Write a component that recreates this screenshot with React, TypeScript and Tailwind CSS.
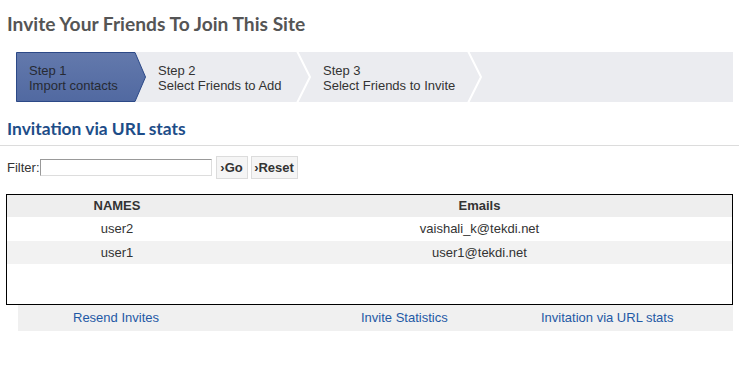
import React from 'react';

const steps = [
  { n: 'Step 1', label: 'Import contacts', width: 'w-[130px]', pl: 'pl-[13px]' },
  { n: 'Step 2', label: 'Select Friends to Add', width: 'w-[166px]', pl: 'pl-[12px]' },
  { n: 'Step 3', label: 'Select Friends to Invite', width: 'w-[171px]', pl: 'pl-[11px]' },
];

const rows = [
  { name: 'user2', email: 'vaishali_k@tekdi.net' },
  { name: 'user1', email: 'user1@tekdi.net' },
];

const Chevron = () => (
  <svg width="16" height="50" viewBox="0 0 16 50" className="flex-none">
    <polyline points="1,-1 14,25 1,51" fill="none" stroke="#ffffff" strokeWidth="2" />
  </svg>
);

export default function App() {
  return (
    <div className="w-[739px] h-[366px] bg-white text-[13px] text-[#333] font-['Liberation_Sans',Arial,sans-serif]">
      {/* Title */}
      <h1 className="pl-[7px] pt-[11px] text-[19.2px] leading-[26px] font-bold text-[#555] font-['Lato',sans-serif]">
        Invite Your Friends To Join This Site
      </h1>

      {/* Steps */}
      <div className="mt-[15px] ml-[16px] w-[717px] h-[50px] bg-[#ebecf0] flex">
        {steps.map((s, i) => (
          <div key={i} className={`${s.width} h-[50px] flex relative flex-none`}>
            {i === 0 && (
              <svg className="absolute inset-0" width="130" height="50" viewBox="0 0 130 50">
                <defs>
                  <linearGradient id="stepBlue" x1="0" y1="0" x2="0" y2="1">
                    <stop offset="0" stopColor="#6379ac" />
                    <stop offset="1" stopColor="#5169a1" />
                  </linearGradient>
                </defs>
                <polygon points="0.5,0.5 119,0.5 129.5,25 119,49.5 0.5,49.5" fill="url(#stepBlue)" stroke="#2c4987" strokeWidth="1" />
              </svg>
            )}
            <div className={`relative flex-1 ${s.pl} pt-[11px] leading-[15px] ${i === 0 ? 'text-[#262a33]' : 'text-[#333]'}`}>
              <div>{s.n}</div>
              <div>{s.label}</div>
            </div>
            {i > 0 && <Chevron />}
          </div>
        ))}
      </div>

      {/* Sub heading */}
      <h2 className="mt-[16px] pl-[7px] text-[17.4px] leading-[22px] font-bold text-[#1d4d88] font-['Lato',sans-serif]">
        Invitation via URL stats
      </h2>
      <div className="mt-[5px] h-px bg-[#dcdcdc]" />

      {/* Filter */}
      <div className="mt-[10px] pl-[7px] flex items-center h-[23px]">
        <span>Filter:</span>
        <input
          className="w-[172px] h-[17px] border border-[#999] border-r-[#ddd] border-b-[#ddd] bg-white outline-none"
          type="text"
        />
        <button className="ml-[4px] w-[32px] h-[23px] bg-[#f5f5f5] border border-[#dcdcdc] font-bold text-[#333]">
          ›Go
        </button>
        <button className="ml-[3px] w-[47px] h-[23px] bg-[#f5f5f5] border border-[#dcdcdc] font-bold text-[#333]">
          ›Reset
        </button>
      </div>

      {/* Table */}
      <div className="mt-[15px] ml-[6px] w-[727px] h-[111px] border border-black">
        <table className="w-full border-collapse">
          <thead>
            <tr className="bg-[#eeeeee] h-[22px]">
              <th className="w-[220px] font-bold text-center">NAMES</th>
              <th className="font-bold text-center">Emails</th>
            </tr>
          </thead>
          <tbody>
            {rows.map((r, i) => (
              <tr key={i} className={`${i % 2 === 1 ? 'bg-[#f2f2f2]' : 'bg-white'} ${i === 0 ? 'h-[24px]' : 'h-[23px]'}`}>
                <td className="text-center">{r.name}</td>
                <td className="text-center">{r.email}</td>
              </tr>
            ))}
          </tbody>
        </table>
      </div>

      {/* Footer links */}
      <div className="ml-[18px] w-[715px] h-[26px] bg-[#f0f0f0] flex items-center text-[#1f59a5]">
        <a className="w-[343px] pl-[55px]" href="#">Resend Invites</a>
        <a className="w-[180px]" href="#">Invite Statistics</a>
        <a href="#">Invitation via URL stats</a>
      </div>
    </div>
  );
}
